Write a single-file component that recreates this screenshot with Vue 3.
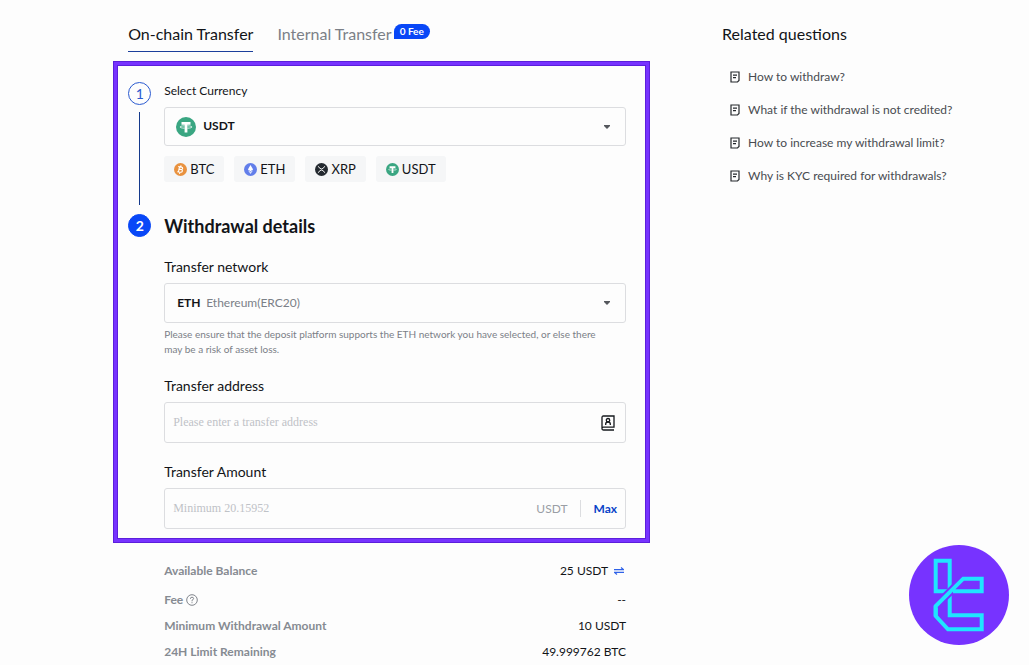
<script setup>
import { ref } from 'vue'

const currency = ref('USDT')
const network = ref('ETH')
const address = ref('')
const amount = ref('')
const coins = ['BTC', 'ETH', 'XRP', 'USDT']
const questions = [
  'How to withdraw?',
  'What if the withdrawal is not credited?',
  'How to increase my withdrawal limit?',
  'Why is KYC required for withdrawals?',
]
</script>

<template>
  <div class="page">
    <main>
      <nav class="tabs">
        <a class="tab active" href="#onchain">On-chain Transfer</a>
        <a class="tab" href="#internal">Internal Transfer</a>
        <span class="badge">0 Fee</span>
      </nav>

      <section class="frame">
        <div class="step">
          <div class="rail">
            <span class="dot">1</span>
            <span class="line"></span>
          </div>
          <div class="body">
            <label class="label small" for="currency">Select Currency</label>
            <div class="picker">
              <select id="currency" v-model="currency" class="with-icon">
                <option v-for="c in coins" :key="c">{{ c }}</option>
              </select>
              <svg class="coin" viewBox="0 0 20 20">
                <circle cx="10" cy="10" r="10" fill="#3aa682" />
                <path d="M5.500 5h9v2.700h-3.100v7.800H8.600V7.700H5.500z" fill="#fff" />
                <path d="M8.600 8.800C2.500 9 2.500 11 8.600 11.200M11.400 8.800c6.100.2 6.100 2.200 0 2.400" fill="none" stroke="#fff" stroke-width=".8" />
              </svg>
              <svg class="caret" viewBox="0 0 6 4"><path d="M0 0h6v1L3 4 0 1z" /></svg>
            </div>
            <div class="chips">
              <button v-for="c in coins" :key="c" type="button" @click="currency = c">
                <svg viewBox="0 0 20 20">
                  <g v-if="c === 'BTC'">
                    <circle cx="10" cy="10" r="10" fill="#e9923f" />
                    <path d="M8.500 5.500l-1.800 9M6.500 5.500l5 .9c2.800.5 2.300 3.800-.6 3.500l-3-.5M11 9.900c3 .6 2.200 4.600-1 4.300L5 13.400M10.800 3.500l-.5 2.600M9 14l-.5 2.600" fill="none" stroke="#fff" stroke-width="1.700" />
                  </g>
                  <g v-else-if="c === 'ETH'">
                    <circle cx="10" cy="10" r="10" fill="#627eea" />
                    <path d="M10 3l4 7-4 2.500L6 10z" fill="#fff" />
                    <path d="M6 11.200l4 2.400 4-2.400-4 5.800z" fill="#dfe5fc" />
                  </g>
                  <g v-else-if="c === 'XRP'">
                    <circle cx="10" cy="10" r="10" fill="#23292f" />
                    <path d="M4.500 5l3.300 3.200q2.200 2 4.400 0L15.500 5M4.500 15l3.300-3.200q2.200-2 4.400 0l3.300 3.200" fill="none" stroke="#fff" stroke-width="1.500" />
                  </g>
                  <g v-else>
                    <circle cx="10" cy="10" r="10" fill="#3aa682" />
                    <path d="M5.500 5h9v2.700h-3.100v7.800H8.600V7.700H5.500z" fill="#fff" />
                    <path d="M8.600 8.800C2.500 9 2.500 11 8.600 11.200M11.400 8.800c6.100.2 6.100 2.200 0 2.400" fill="none" stroke="#fff" stroke-width=".8" />
                  </g>
                </svg>
                {{ c }}
              </button>
            </div>
          </div>
        </div>

        <div class="step">
          <div class="rail"><span class="dot filled">2</span></div>
          <div class="body">
            <h2>Withdrawal details</h2>

            <label class="label" for="network">Transfer network</label>
            <div class="picker">
              <select id="network" v-model="network">
                <option>ETH</option>
              </select>
              <span class="network-name">Ethereum(ERC20)</span>
              <svg class="caret" viewBox="0 0 6 4"><path d="M0 0h6v1L3 4 0 1z" /></svg>
            </div>
            <p class="hint">Please ensure that the deposit platform supports the ETH network you have selected, or else there may be a risk of asset loss.</p>

            <label class="label" for="address">Transfer address</label>
            <div class="field">
              <input id="address" v-model="address" type="text" placeholder="Please enter a transfer address">
              <button type="button" class="book" aria-label="Address book">
                <svg viewBox="0 0 14 16" fill="none" stroke="#15181c" stroke-width="1.300">
                  <path d="M13 15H2.600Q1 15 1 13.500V2.400Q1 1 2.400 1H13v11.200H2.400Q1 12.200 1 13.600" />
                  <circle cx="7" cy="5.200" r="1.700" />
                  <path d="M4.700 10V9q0-2 2.300-2t2.300 2v1" />
                </svg>
              </button>
            </div>

            <label class="label amount-label" for="amount">Transfer Amount</label>
            <div class="field">
              <input id="amount" v-model="amount" type="text" placeholder="Minimum 20.15952">
              <span class="unit">USDT</span>
              <span class="divider"></span>
              <button type="button" class="max">Max</button>
            </div>
          </div>
        </div>
      </section>

      <dl class="summary">
        <div class="row first">
          <dt>Available Balance</dt>
          <dd>
            25 USDT
            <svg class="swap" viewBox="0 0 10 8" fill="none" stroke="#2f62e8" stroke-width="1.200">
              <path d="M0 2.600h9.500L7 .5M10 5.400H.5L3 7.500" />
            </svg>
          </dd>
        </div>
        <div class="row">
          <dt>
            Fee
            <svg class="help" viewBox="0 0 12 12" fill="none" stroke="#81858c">
              <circle cx="6" cy="6" r="5.300" />
              <path d="M4.400 4.800q0-1.600 1.600-1.600t1.600 1.400Q7.600 5.500 6 6.300V7.300M6 8.200v1" />
            </svg>
          </dt>
          <dd>--</dd>
        </div>
        <div class="row"><dt>Minimum Withdrawal Amount</dt><dd>10 USDT</dd></div>
        <div class="row"><dt>24H Limit Remaining</dt><dd>49.999762 BTC</dd></div>
      </dl>
    </main>

    <aside>
      <h3>Related questions</h3>
      <ul>
        <li v-for="q in questions" :key="q">
          <a href="#help">
            <svg viewBox="0 0 10 12" fill="none" stroke="#25282c" stroke-width="1.200">
              <path d="M1 1h8v8.500L7.500 11H1zM3 4.200h4M3 6.600h3" />
            </svg>
            {{ q }}
          </a>
        </li>
      </ul>
    </aside>

    <svg class="brand" viewBox="0 0 100 100">
      <circle cx="50" cy="50" r="50" fill="#7733ff" />
      <g fill="none" stroke="#1fe5ff" stroke-width="4">
        <path d="M39 46.300H26.700V15.700h14V46" />
        <path d="M40.700 50V70.300h32v14H39L26.700 71V61" />
        <path d="M26.700 61L54.300 33.700" stroke="#7733ff" stroke-width="8" />
        <path d="M44 46.300h28.700V33.700H54.300L26.700 61V71" />
      </g>
    </svg>
  </div>
</template>

<style>
body {
  margin: 0;
  background: #fdfdfd;
}
</style>

<style scoped>
* {
  box-sizing: border-box;
}
.page {
  display: grid;
  grid-template-columns: minmax(0, 537fr) minmax(0, 307fr);
  column-gap: 72px;
  padding: 24px 0 0 11%;
  font-family: Lato, "Open Sans", sans-serif;
  font-size: 12px;
  color: #121418;
}
button, select, input {
  font: inherit;
  color: inherit;
  margin: 0;
  padding: 0;
  border: 0;
  background: none;
}
svg {
  flex: none;
}
.tabs {
  display: flex;
  height: 37px;
  padding-left: 15px;
}
.tab {
  height: 28px;
  margin-right: 2px;
  line-height: 20px;
  font-size: 16px;
  color: #7b8087;
  text-decoration: none;
}
.tab.active {
  margin-right: 24px;
  color: #121418;
  border-bottom: 1px solid #1c3f9c;
}
.badge {
  height: 15px;
  padding: 0 6px;
  line-height: 15px;
  font-size: 10px;
  font-weight: 700;
  color: #fff;
  background: #0847f7;
  border-radius: 8px 8px 8px 0;
}
.frame {
  padding: 20px 23px 13px 14px;
  border: 1px solid #5c1fdc;
  box-shadow: inset 0 0 0 3px #7733ff, inset 0 0 0 4px #5c1fdc;
}
.step {
  display: flex;
  gap: 13px;
  min-height: 132px;
}
.rail {
  display: flex;
  flex-direction: column;
  align-items: center;
  width: 23px;
}
.dot {
  width: 23px;
  height: 23px;
  line-height: 21px;
  text-align: center;
  font-size: 14px;
  color: #2a5ad0;
  border: 1px solid #2a5ad0;
  border-radius: 50%;
}
.dot.filled {
  color: #fff;
  font-weight: 700;
  background: #0847f7;
  border-color: #0847f7;
}
.line {
  flex: 1;
  width: 1px;
  margin: 7px 0 9px;
  background: #153a8c;
}
.body {
  flex: 1;
  min-width: 0;
}
.label {
  display: block;
  line-height: 20px;
  margin-bottom: 6px;
  font-size: 14px;
}
.label.small {
  line-height: 18px;
  margin-bottom: 7px;
  font-size: 12px;
}
.picker {
  display: grid;
  align-items: center;
}
.picker > * {
  grid-area: 1 / 1;
}
.picker select {
  width: 100%;
  height: 40px;
  padding: 0 30px 2px 12px;
  appearance: none;
  font-weight: 700;
  border: 1px solid #dcdde0;
  border-radius: 3px;
}
.picker .with-icon {
  height: 39px;
  padding-left: 38px;
}
.coin {
  width: 20px;
  margin-left: 12px;
  pointer-events: none;
}
.caret {
  width: 6px;
  margin-right: 16px;
  justify-self: end;
  fill: #55585d;
  pointer-events: none;
}
.network-name {
  margin-left: 42px;
  padding-bottom: 2px;
  color: #7b8087;
  pointer-events: none;
}
.chips {
  display: flex;
  gap: 10px;
  margin-top: 10px;
}
.chips button {
  display: flex;
  align-items: center;
  gap: 3px;
  height: 26px;
  padding: 0 10px;
  font-size: 13px;
  background: #f5f6f7;
  border-radius: 3px;
}
.chips svg {
  width: 13px;
}
h2 {
  margin: 0 0 19px;
  line-height: 24px;
  font-size: 18px;
  font-weight: 700;
}
.hint {
  margin: 4px 0 19px;
  padding-right: 16px;
  line-height: 15px;
  font-size: 10px;
  color: #7b8087;
}
.amount-label {
  margin-top: 19px;
}
.field {
  display: flex;
  align-items: center;
  height: 41px;
  padding: 0 8px;
  border: 1px solid #dcdde0;
  border-radius: 3px;
}
.field input {
  flex: 1;
  min-width: 0;
  font-family: "Liberation Serif", serif;
  font-size: 12px;
}
.field input::placeholder {
  color: #bfc2c7;
}
.book svg {
  display: block;
  width: 14px;
  margin-right: 2px;
}
.unit {
  color: #9a9ea5;
}
.divider {
  width: 1px;
  height: 17px;
  margin: 0 13px 0 12px;
  background: #dcdde0;
}
.max {
  font-weight: 700;
  color: #0a43c8;
}
.summary {
  margin: 15px 24px 0 51px;
}
.row {
  display: flex;
  justify-content: space-between;
  line-height: 26px;
}
.row.first {
  margin-bottom: 3px;
}
dt {
  display: flex;
  align-items: center;
  gap: 3px;
  font-weight: 700;
  color: #868b92;
}
dd {
  display: flex;
  align-items: center;
  gap: 6px;
  margin: 0;
}
.swap {
  width: 10px;
  margin-right: 2px;
}
.help {
  width: 12px;
}
h3 {
  margin: 0 0 23px;
  line-height: 20px;
  font-size: 16px;
  font-weight: 400;
}
ul {
  display: grid;
  gap: 13px;
  margin: 0;
  padding: 0 0 0 8px;
  list-style: none;
}
li a {
  display: flex;
  align-items: center;
  gap: 8px;
  line-height: 20px;
  color: #484b50;
  text-decoration: none;
}
li svg {
  width: 10px;
}
.brand {
  position: fixed;
  right: 20px;
  bottom: 20px;
  width: 100px;
}
</style>
